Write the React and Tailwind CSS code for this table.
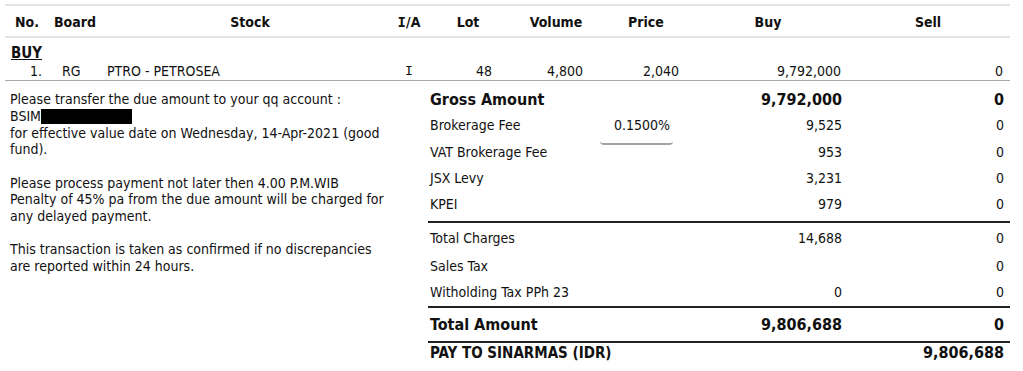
import React from 'react';

const charges = [
  { label: 'VAT Brokerage Fee', buy: '953', sell: '0' },
  { label: 'JSX Levy', buy: '3,231', sell: '0' },
  { label: 'KPEI', buy: '979', sell: '0' },
];

const ContractNote = () => {
  return (
    <div className="min-h-screen bg-white text-[14px] text-[#111] font-['Tahoma','DejaVu_Sans_Condensed','DejaVu_Sans',sans-serif]">
      <div className="pt-[4px] ml-[5px] w-[1005px]">
        {/* trade table */}
        <div className="border-t-2 border-[#e4e4e4]">
          <div className="flex h-[32px] items-center pt-[3px] font-bold border-b-2 border-[#e4e4e4]">
            <div className="w-[43px] pl-[10px]">No.</div>
            <div className="w-[52px] pl-[6px]">Board</div>
            <div className="w-[290px] pl-[10px] text-center">Stock</div>
            <div className="w-[38px] text-center">
              <span className="font-['DejaVu_Sans_Mono',monospace]">I</span>/A
            </div>
            <div className="w-[72px] pl-[8px] text-center">Lot</div>
            <div className="w-[90px] pl-[22px] text-center">Volume</div>
            <div className="w-[100px] pl-[12px] text-center">Price</div>
            <div className="w-[160px] pl-[10px] pr-[14px] text-center">Buy</div>
            <div className="w-[160px] pr-[4px] text-center">Sell</div>
          </div>
          <div className="h-[24px] pt-[6px] pl-[6px] leading-[18px] text-[15px] font-bold underline">BUY</div>
          <div className="flex h-[18px] items-center border-b border-[#a8a8a8] box-content">
            <div className="w-[43px] pr-[6px] text-right">1.</div>
            <div className="w-[52px] pl-[14px]">RG</div>
            <div className="w-[290px] pl-[7px]">PTRO - PETROSEA</div>
            <div className="w-[38px] text-center font-['DejaVu_Sans_Mono',monospace] text-[13px]">I</div>
            <div className="w-[72px] pr-[8px] text-right">48</div>
            <div className="w-[90px] pr-[7px] text-right">4,800</div>
            <div className="w-[100px] pr-[11px] text-right">2,040</div>
            <div className="w-[160px] pr-[9px] text-right">9,792,000</div>
            <div className="w-[160px] pr-[7px] text-right">0</div>
          </div>
        </div>

        <div className="flex">
          {/* payment notes */}
          <div className="w-[423px] pl-[5px] pt-[10px] leading-[16.5px] whitespace-nowrap">
            <p>Please transfer the due amount to your qq account :</p>
            <p className="flex items-center h-[15px] mt-[1px]">
              BSIM<span className="inline-block w-[91px] h-[15px] bg-black"></span>
            </p>
            <p className="mt-[1px]">
              for effective value date on Wednesday, 14-Apr-2021 (good
              <br />
              fund).
            </p>
            <p className="mt-[17px]">
              Please process payment not later then 4.00 P.M.WIB
              <br />
              Penalty of 45% pa from the due amount will be charged for
              <br />
              any delayed payment.
            </p>
            <p className="mt-[17px]">
              This transaction is taken as confirmed if no discrepancies
              <br />
              are reported within 24 hours.
            </p>
          </div>

          {/* summary */}
          <div className="w-[582px] pt-[5px]">
            <div className="flex h-[26px] items-center pt-[1px] text-[16px] font-bold">
              <div className="w-[245px] pl-[2px]">Gross Amount</div>
              <div className="w-[175px] pr-[6px] text-right">9,792,000</div>
              <div className="w-[162px] pr-[6px] text-right">0</div>
            </div>
            <div className="flex h-[27px] items-start">
              <div className="w-[172px] pl-[2px] mt-[5px] leading-[16px]">Brokerage Fee</div>
              <div className="w-[73px] mt-[5px] pb-[10px] leading-[16px] pr-[3px] text-right border-b-2 border-[#a3a3a3] rounded-sm">0.1500%</div>
              <div className="w-[175px] pr-[6px] mt-[5px] leading-[16px] text-right">9,525</div>
              <div className="w-[162px] pr-[6px] mt-[5px] leading-[16px] text-right">0</div>
            </div>
            {charges.map((c) => (
              <div key={c.label} className="flex h-[26px] items-center">
                <div className="w-[245px] pl-[2px]">{c.label}</div>
                <div className="w-[175px] pr-[6px] text-right">{c.buy}</div>
                <div className="w-[162px] pr-[6px] text-right">{c.sell}</div>
              </div>
            ))}
            <div className="mt-[4px] border-t-2 border-[#222]">
              <div className="flex h-[30px] items-center">
                <div className="w-[245px] pl-[2px]">Total Charges</div>
                <div className="w-[175px] pr-[6px] text-right">14,688</div>
                <div className="w-[162px] pr-[6px] text-right">0</div>
              </div>
              <div className="flex h-[26px] items-center">
                <div className="w-[245px] pl-[2px]">Sales Tax</div>
                <div className="w-[175px] pr-[6px] text-right"></div>
                <div className="w-[162px] pr-[6px] text-right">0</div>
              </div>
              <div className="flex h-[27px] items-center">
                <div className="w-[245px] pl-[2px]">Witholding Tax PPh 23</div>
                <div className="w-[175px] pr-[6px] text-right">0</div>
                <div className="w-[162px] pr-[6px] text-right">0</div>
              </div>
            </div>
            <div className="flex h-[32px] items-center pt-[1px] text-[16px] font-bold border-t-2 border-b-2 border-[#222] box-content">
              <div className="w-[245px] pl-[2px]">Total Amount</div>
              <div className="w-[175px] pr-[6px] text-right">9,806,688</div>
              <div className="w-[162px] pr-[6px] text-right">0</div>
            </div>
            <div className="flex h-[20px] items-center font-bold">
              <div className="w-[420px] pl-[2px] text-[15px]">PAY TO SINARMAS (IDR)</div>
              <div className="w-[162px] pr-[6px] text-right text-[16px]">9,806,688</div>
            </div>
          </div>
        </div>
      </div>
    </div>
  );
};

export default ContractNote;
